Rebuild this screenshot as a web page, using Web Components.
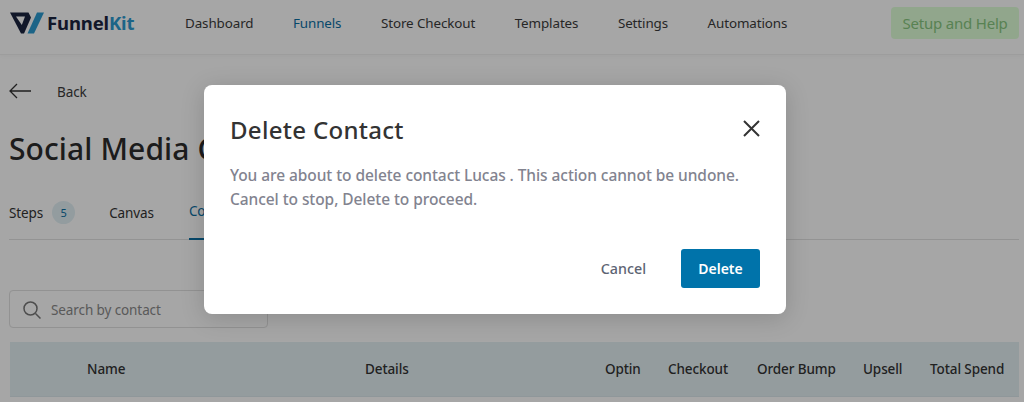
<!DOCTYPE html>
<html><head><meta charset="utf-8">
<style>
html,body{margin:0;height:402px;overflow:hidden;background:#fff}
body{font-family:"Noto Sans","Open Sans",sans-serif;position:relative}
</style></head><body>
<app-header></app-header>
<funnel-page></funnel-page>
<delete-modal></delete-modal>
<script>
function def(name,html){customElements.define(name,class extends HTMLElement{constructor(){super();this.attachShadow({mode:'open'}).innerHTML=html}})}
def('app-header',`<style>
:host{display:flex;align-items:center;height:55px;box-sizing:border-box;padding:0 5px 9px 9px;border-bottom:1px solid #f1f1f1;box-shadow:0 1px 4px rgba(0,0,0,.04);font-size:13.400px;color:#3b3b3b;letter-spacing:-.1px}
svg{display:block;flex:none}
.brand{display:flex;align-items:center;gap:2px;width:176px;flex:none;font:700 18.500px "Noto Sans",sans-serif;letter-spacing:-.15px;color:#1b2440}
.brand b{color:#2b9ad0;font-weight:700}
nav{display:flex;gap:39.500px;flex:1}
.on{color:#0b6fa4}
button{font:inherit;font-size:15px;letter-spacing:-.2px;border:0;background:#dfffd8;color:#88c880;border-radius:4px;width:128px;height:32px;padding:0;margin-top:1px}
</style>
<div class="brand"><svg width="36" height="24" viewBox="0 0 36 24"><path d="M1 1.500H19.500L22 6.500 15 22.500H12Z" fill="#1b2440"/><path d="M7 5.500H16L12.800 14Z" fill="#fff"/><path d="M28 1.500H35L25 22.500H18.500Z" fill="#2b9ad0"/></svg><span>Funnel<b>Kit</b></span></div>
<nav><span>Dashboard</span><span class="on">Funnels</span><span>Store Checkout</span><span>Templates</span><span>Settings</span><span>Automations</span></nav>
<button>Setup and Help</button>`);
def('funnel-page',`<style>
:host{display:block;padding:0 5px 0 9px;color:#333;font-size:13.500px;letter-spacing:-.1px}
.back{display:flex;align-items:center;gap:25px;height:36px;margin-top:19px;color:#3b3b3b}
.back svg{flex:none;margin-top:-2px}
h1{font-size:30px;font-weight:500;margin:18px 0 0;height:42px;line-height:42px;letter-spacing:.1px;color:#2c2c2c;white-space:nowrap}
.tabs{display:flex;align-items:center;height:54px;margin-top:16px;border-bottom:1px solid #e2e2e2;box-sizing:border-box}
.tabs span{display:block}
.badge{width:23px;height:23px;border-radius:50%;background:#e2f0f5;color:#0b6fa4;font-size:11px;display:flex!important;align-items:center;justify-content:center;margin:0 34px 0 9px}
.cur{color:#0b6fa4;margin-left:35px;align-self:stretch;line-height:51px;border-bottom:2px solid #0b6fa4;height:54px;width:60px;box-sizing:border-box}
.search{display:flex;align-items:center;gap:9px;box-sizing:border-box;width:259px;height:38px;margin-top:50px;border:1px solid #e0e0e0;border-radius:4px;padding:1px 12px 0;color:#8a8a8a}
.head{display:grid;grid-template-columns:77px 278px 240px 63px 89px 106px 67px 1fr;align-items:center;height:55px;margin:14px 0 0 1px;background:#e4f0f3;border-bottom:1px solid #dce8ed;font-weight:500;color:#333;white-space:nowrap;box-sizing:border-box}
</style>
<div class="back"><svg width="23" height="16" viewBox="0 0 23 16" fill="none" stroke="#333" stroke-width="1.300"><path d="M22 8H1M8 1 1 8l7 7"/></svg><span>Back</span></div>
<h1>Social Media Giveaway</h1>
<div class="tabs"><span>Steps</span><span class="badge">5</span><span>Canvas</span><span class="cur">Contacts</span></div>
<div class="search"><svg width="20" height="20" viewBox="0 0 20 20" fill="none" stroke="#777" stroke-width="1.500"><circle cx="8.500" cy="8.500" r="6.500"/><path d="m13.500 13.500 5 5"/></svg><span>Search by contact</span></div>
<div class="head"><span></span><span>Name</span><span>Details</span><span>Optin</span><span>Checkout</span><span>Order Bump</span><span>Upsell</span><span>Total Spend</span></div>`);
def('delete-modal',`<style>
:host{position:absolute;inset:0;display:block;background:rgba(0,0,0,.35);font-family:"Noto Sans",sans-serif}
.box{position:absolute;left:204px;top:85px;width:582px;height:229px;box-sizing:border-box;background:#fff;border-radius:8px;box-shadow:0 4px 24px rgba(0,0,0,.16);padding:25px 26px 26px;display:flex;flex-direction:column}
.top{display:flex;justify-content:space-between;align-items:center;height:38px}
h2{margin:0;font-size:24px;font-weight:500;color:#333;letter-spacing:.3px}
.x{display:block;margin-right:-1px;margin-top:-2px}
p{margin:15px 0 0;font-size:15.500px;line-height:24px;font-weight:500;color:#82838f;letter-spacing:-.07px}
.acts{margin-top:auto;display:flex;justify-content:flex-end;align-items:center;gap:35px}
.cancel{font-size:14.300px;color:#5d6473;font-weight:500}
.del{font:600 14px "Noto Sans",sans-serif;color:#fff;background:#0073aa;border:0;border-radius:3px;width:79px;height:39px;padding:0}
</style>
<div class="box"><div class="top"><h2>Delete Contact</h2><svg class="x" width="19" height="19" viewBox="0 0 19 19" fill="none" stroke="#333" stroke-width="2"><path d="M2 2l15 15M17 2 2 17"/></svg></div>
<p>You are about to delete contact Lucas . This action cannot be undone.<br>Cancel to stop, Delete to proceed.</p>
<div class="acts"><span class="cancel">Cancel</span><button class="del">Delete</button></div></div>`);
</script></body></html>
